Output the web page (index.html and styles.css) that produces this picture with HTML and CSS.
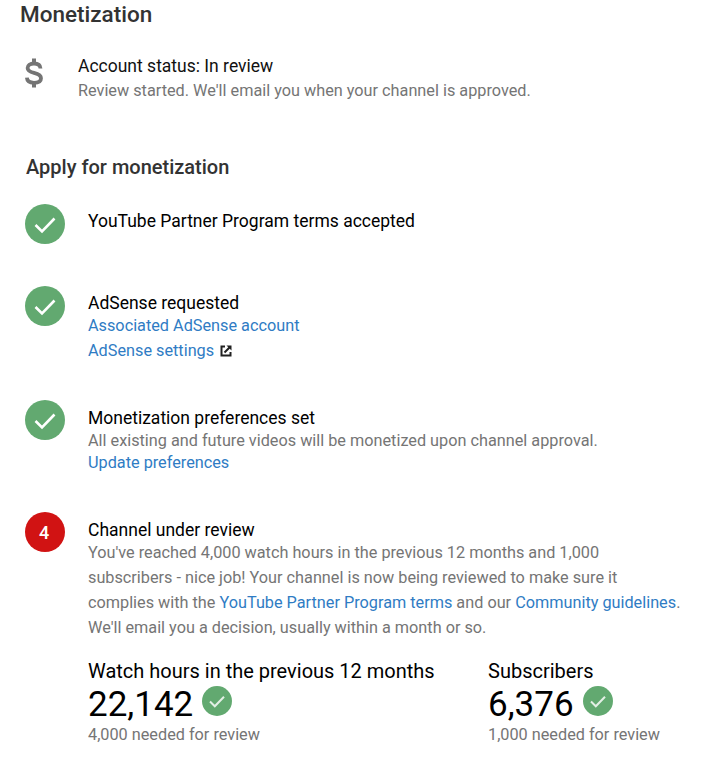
FILE: index.html
```html
<!DOCTYPE html>
<html lang="en">
<head>
    <meta charset="UTF-8">
    <meta name="viewport" content="width=device-width, initial-scale=1.0">
    <title>Monetization</title>
    <link rel="stylesheet" href="styles.css">
</head>
<body>
    <h1 class="page-title">Monetization</h1>

    <div class="account">
        <svg class="dollar" viewBox="0 0 20 32" width="20" height="32">
            <path d="M16.500 11.500C16.300 8.300 14 6.500 10 6.500 6 6.500 3.600 8.400 3.600 11c0 2.800 2.400 3.900 6.400 4.900 4.400 1.100 7 2.300 7 5.300 0 2.900-2.700 4.600-7 4.600-4.200 0-6.900-1.900-7.100-5.100" fill="none" stroke="#757575" stroke-width="3.800"/>
            <path d="M10 1.500v5M10 25.500v5" fill="none" stroke="#757575" stroke-width="4"/>
        </svg>
        <div>
            <div class="account-title">Account status: In review</div>
            <div class="muted">Review started. We'll email you when your channel is approved.</div>
        </div>
    </div>

    <h2 class="section-title">Apply for monetization</h2>

    <div class="step step-terms">
        <span class="badge badge-done">
            <svg viewBox="0 0 40 40" width="40" height="40"><path d="M10.500 21l6.500 6.500 12.500-13" fill="none" stroke="#fff" stroke-width="2.600"/></svg>
        </span>
        <div class="step-body">
            <div class="step-title">YouTube Partner Program terms accepted</div>
        </div>
    </div>

    <div class="step step-adsense">
        <span class="badge badge-done">
            <svg viewBox="0 0 40 40" width="40" height="40"><path d="M10.500 21l6.500 6.500 12.500-13" fill="none" stroke="#fff" stroke-width="2.600"/></svg>
        </span>
        <div class="step-body">
            <div class="step-title">AdSense requested</div>
            <div class="line"><a href="#">Associated AdSense account</a></div>
            <div class="line line-settings">
                <a href="#">AdSense settings</a>
                <svg class="external" viewBox="0 0 12 12" width="12" height="12">
                    <path d="M5 1.500H1.500v9h9V7" fill="none" stroke="#212121" stroke-width="2"/>
                    <path d="M4.500 7.500L10 2" fill="none" stroke="#212121" stroke-width="2"/>
                    <path d="M6.500 .5h5v5z" fill="#212121"/>
                </svg>
            </div>
        </div>
    </div>

    <div class="step step-prefs">
        <span class="badge badge-done">
            <svg viewBox="0 0 40 40" width="40" height="40"><path d="M10.500 21l6.500 6.500 12.500-13" fill="none" stroke="#fff" stroke-width="2.600"/></svg>
        </span>
        <div class="step-body step-body-low">
            <div class="step-title">Monetization preferences set</div>
            <div class="muted line-first">All existing and future videos will be monetized upon channel approval.</div>
            <div class="line-tight"><a href="#">Update preferences</a></div>
        </div>
    </div>

    <div class="step step-review">
        <span class="badge badge-current">4</span>
        <div class="step-body step-body-low">
            <div class="step-title">Channel under review</div>
            <p class="muted review-text">You've reached 4,000 watch hours in the previous 12 months and 1,000<br>subscribers - nice job! Your channel is now being reviewed to make sure it<br>complies with the <a href="#">YouTube Partner Program terms</a> and our <a href="#">Community guidelines</a>.<br>We'll email you a decision, usually within a month or so.</p>

            <div class="stats">
                <div class="stat stat-hours">
                    <div class="stat-label">Watch hours in the previous 12 months</div>
                    <div class="stat-value">22,142
                        <span class="mini-badge">
                            <svg viewBox="0 0 30 30" width="30" height="30"><path d="M8 15.500l4.800 4.800 9.200-9.600" fill="none" stroke="#e3efe5" stroke-width="2"/></svg>
                        </span>
                    </div>
                    <div class="muted">4,000 needed for review</div>
                </div>
                <div class="stat">
                    <div class="stat-label">Subscribers</div>
                    <div class="stat-value">6,376
                        <span class="mini-badge">
                            <svg viewBox="0 0 30 30" width="30" height="30"><path d="M8 15.500l4.800 4.800 9.200-9.600" fill="none" stroke="#e3efe5" stroke-width="2"/></svg>
                        </span>
                    </div>
                    <div class="muted">1,000 needed for review</div>
                </div>
            </div>
        </div>
    </div>
</body>
</html>
```

FILE: styles.css
```css
body {
    font-family: Roboto, Arial, sans-serif;
    font-size: 16.25px;
    margin: 0;
    padding: 0 0 0 25px;
    background-color: #ffffff;
    color: #000000;
}
a {
    color: #2f7cc4;
    text-decoration: none;
}
.page-title {
    font-size: 22.5px;
    font-weight: 500;
    line-height: 28px;
    color: #333333;
    margin: 0 0 0 -5px;
}
.muted {
    color: #757575;
}
.account {
    display: flex;
    margin-top: 27px;
}
.dollar {
    margin-top: 2px;
    margin-left: -1px;
    flex-shrink: 0;
}
.account-title {
    font-size: 17.5px;
    line-height: 22px;
    color: #111111;
}
.account > div {
    margin-left: 34px;
}
.account .muted {
    line-height: 28px;
}
.section-title {
    font-size: 20px;
    font-weight: 500;
    line-height: 26px;
    color: #333333;
    margin: 49px 0 0 1px;
}
.step {
    display: flex;
}
.step-terms {
    margin-top: 24px;
}
.step-adsense {
    margin-top: 42px;
}
.step-prefs {
    margin-top: 37px;
}
.step-review {
    margin-top: 38px;
}
.badge {
    width: 40px;
    height: 40px;
    border-radius: 50%;
    flex-shrink: 0;
    display: flex;
    align-items: center;
    justify-content: center;
}
.badge-done {
    background-color: #62a970;
}
.badge-current {
    background-color: #d11313;
    color: #ffffff;
    font-weight: 500;
    font-size: 18px;
    box-sizing: border-box;
    padding-right: 2px;
}
.step-body {
    margin-left: 23px;
    padding-top: 6px;
    flex: 1;
}
.step-body-low {
    padding-top: 7px;
}
.step-title {
    line-height: 22px;
    font-size: 17.5px;
}
.line {
    line-height: 24px;
}
.line-tight {
    line-height: 22px;
}
.line-first {
    line-height: 23px;
}
.line-settings {
    margin-top: 1px;
    display: flex;
    align-items: center;
}
.external {
    margin-left: 6px;
}
.review-text {
    margin: -1px 0 0;
    line-height: 25px;
    white-space: nowrap;
}
.stats {
    display: flex;
    margin-top: 18px;
}
.stat-hours {
    width: 400px;
}
.stat-label {
    font-size: 20px;
    line-height: 27px;
}
.stat-value {
    font-size: 35px;
    line-height: 40px;
    display: flex;
    align-items: flex-start;
    gap: 9px;
    white-space: nowrap;
}
.mini-badge {
    width: 30px;
    height: 30px;
    margin-top: 1px;
    border-radius: 50%;
    background-color: #62a970;
}
.mini-badge svg {
    display: block;
}
```
